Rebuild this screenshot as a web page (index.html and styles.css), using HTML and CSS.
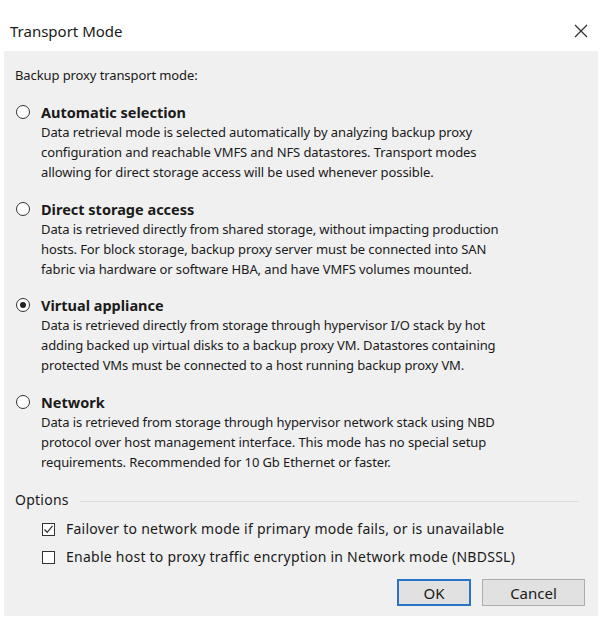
FILE: index.html
```html
<!DOCTYPE html>
<html lang="en">
<head>
    <meta charset="UTF-8">
    <title>Transport Mode</title>
    <link rel="stylesheet" href="styles.css">
</head>
<body>
    <div class="dialog">
        <div class="titlebar">
            <span class="title">Transport Mode</span>
            <svg class="close" width="14" height="14" viewBox="0 0 14 14">
                <path d="M1 1 L13 13 M13 1 L1 13" stroke="#333" stroke-width="1.3" fill="none"/>
            </svg>
        </div>

        <div class="content">
            <div class="group-label">Backup proxy transport mode:</div>

            <div class="modes">
                <div class="mode">
                    <div class="mode-head">
                        <span class="radio"></span>
                        <span class="mode-name">Automatic selection</span>
                    </div>
                    <div class="mode-desc">Data retrieval mode is selected automatically by analyzing backup proxy<br>configuration and reachable VMFS and NFS datastores. Transport modes<br>allowing for direct storage access will be used whenever possible.</div>
                </div>

                <div class="mode">
                    <div class="mode-head">
                        <span class="radio"></span>
                        <span class="mode-name">Direct storage access</span>
                    </div>
                    <div class="mode-desc">Data is retrieved directly from shared storage, without impacting production<br>hosts. For block storage, backup proxy server must be connected into SAN<br>fabric via hardware or software HBA, and have VMFS volumes mounted.</div>
                </div>

                <div class="mode">
                    <div class="mode-head">
                        <span class="radio checked"></span>
                        <span class="mode-name">Virtual appliance</span>
                    </div>
                    <div class="mode-desc">Data is retrieved directly from storage through hypervisor I/O stack by hot<br>adding backed up virtual disks to a backup proxy VM. Datastores containing<br>protected VMs must be connected to a host running backup proxy VM.</div>
                </div>

                <div class="mode">
                    <div class="mode-head">
                        <span class="radio"></span>
                        <span class="mode-name">Network</span>
                    </div>
                    <div class="mode-desc">Data is retrieved from storage through hypervisor network stack using NBD<br>protocol over host management interface. This mode has no special setup<br>requirements. Recommended for 10 Gb Ethernet or faster.</div>
                </div>
            </div>

            <div class="options-head">
                <span>Options</span>
                <span class="rule"></span>
            </div>

            <div class="options">
                <div class="option">
                    <span class="checkbox">
                        <svg width="13" height="13" viewBox="0 0 13 13">
                            <path d="M2.5 6.5 L5.2 9.3 L10.5 2.8" stroke="#333" stroke-width="1.3" fill="none"/>
                        </svg>
                    </span>
                    <span>Failover to network mode if primary mode fails, or is unavailable</span>
                </div>
                <div class="option">
                    <span class="checkbox"></span>
                    <span>Enable host to proxy traffic encryption in Network mode (NBDSSL)</span>
                </div>
            </div>

            <div class="buttons">
                <button class="btn btn-default">OK</button>
                <button class="btn btn-cancel">Cancel</button>
            </div>
        </div>
    </div>
</body>
</html>
```

FILE: styles.css
```css
body {
    margin: 0;
    background-color: #ffffff;
    font-family: "Noto Sans", "Open Sans", sans-serif;
    color: #1a1a1a;
}

.dialog {
    width: 602px;
    height: 625px;
}

.titlebar {
    height: 51px;
    display: flex;
    align-items: center;
    justify-content: space-between;
    padding: 10px 14px 0 10px;
    box-sizing: border-box;
}

.title {
    font-size: 15px;
    color: #1a1a1a;
}

.close {
    display: block;
}

.content {
    background-color: #f0f0f0;
    margin: 0 4px;
    height: 565px;
    padding: 14px 13px 0 11px;
    box-sizing: border-box;
    font-size: 13px;
    letter-spacing: -0.1px;
    line-height: 20px;
}

.modes {
    display: flex;
    flex-direction: column;
    gap: 16.7px;
    margin-top: 17px;
}

.mode-head {
    display: flex;
    align-items: center;
    gap: 11px;
    padding-left: 1px;
}

.radio {
    width: 12px;
    height: 12px;
    border: 1px solid #333;
    border-radius: 50%;
    background-color: #fff;
    display: flex;
    align-items: center;
    justify-content: center;
}

.radio.checked::after {
    content: "";
    width: 6px;
    height: 6px;
    border-radius: 50%;
    background-color: #222;
}

.mode-name {
    font-weight: bold;
    font-size: 14.5px;
    letter-spacing: 0;
}

.mode-desc {
    padding-left: 26px;
}

.options-head {
    display: flex;
    align-items: center;
    gap: 11px;
    margin-top: 18px;
    font-size: 14px;
    letter-spacing: 0.25px;
}

.rule {
    flex: 1;
    height: 1px;
    background-color: #dcdcdc;
    margin-top: 2px;
    margin-right: 6px;
}

.options {
    display: flex;
    flex-direction: column;
    gap: 8px;
    margin-top: 9px;
    padding-left: 27px;
}

.option {
    display: flex;
    align-items: center;
    gap: 11px;
    font-size: 14px;
    letter-spacing: 0.25px;
}

.checkbox {
    width: 13px;
    height: 13px;
    border: 1px solid #333;
    background-color: #fff;
    box-sizing: border-box;
    display: flex;
    align-items: center;
    justify-content: center;
}

.checkbox svg {
    display: block;
    flex-shrink: 0;
}

.buttons {
    display: flex;
    justify-content: flex-end;
    gap: 11px;
    margin-top: 12px;
}

.btn {
    height: 27px;
    font-family: "Noto Sans", "Open Sans", sans-serif;
    font-size: 15px;
    color: #1a1a1a;
    background-color: #e1e1e1;
    border: 1px solid #adadad;
    padding: 0;
}

.btn-default {
    width: 74px;
    border: 2px solid #2a73c9;
}

.btn-cancel {
    width: 103px;
}
```
